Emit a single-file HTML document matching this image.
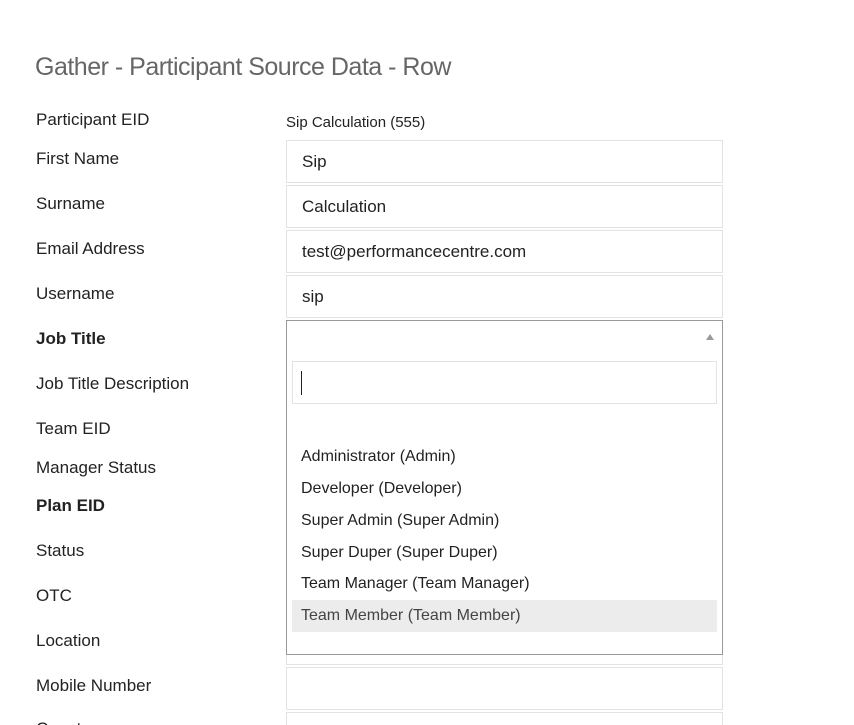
<html style="overflow:hidden"><head><style>
html,body{overflow:hidden;height:725px}
body{margin:0;width:854px;background:#fff;font-family:"Liberation Sans",sans-serif;color:#222;position:relative}
.a{position:absolute}
.l{position:absolute;left:36px;font-size:17px}
.in{position:absolute;left:286px;height:41px;border:1px solid #e3e3e3;font-size:17px;line-height:41px;padding-left:15px;width:420px;background:#fff}
.o{position:absolute;left:301px;font-size:16px;color:#222}
</style></head><body>
<div class="a" style="left:35px;top:53px;font-size:25px;color:#666;letter-spacing:-0.5px">Gather - Participant Source Data - Row</div>
<div class="l" style="top:110px">Participant EID</div>
<div class="a" style="left:286px;top:114px;font-size:15px">Sip Calculation (555)</div>
<div class="l" style="top:149px">First Name</div>
<div class="l" style="top:194px">Surname</div>
<div class="l" style="top:239px">Email Address</div>
<div class="l" style="top:284px">Username</div>
<div class="l" style="top:329px;font-weight:bold">Job Title</div>
<div class="l" style="top:374px">Job Title Description</div>
<div class="l" style="top:419px">Team EID</div>
<div class="l" style="top:458px">Manager Status</div>
<div class="l" style="top:496px;font-weight:bold">Plan EID</div>
<div class="l" style="top:541px">Status</div>
<div class="l" style="top:586px">OTC</div>
<div class="l" style="top:631px">Location</div>
<div class="l" style="top:676px">Mobile Number</div>
<div class="l" style="top:719px">Country</div>
<div class="in" style="top:140px">Sip</div>
<div class="in" style="top:185px">Calculation</div>
<div class="in" style="top:230px">test@performancecentre.com</div>
<div class="in" style="top:275px">sip</div>
<div class="in" style="top:622px"></div>
<div class="in" style="top:667px"></div>
<div class="in" style="top:712px"></div>
<div class="a" style="left:286px;top:320px;width:435px;height:333px;border:1px solid #999;background:#fff"></div>
<div class="a" style="left:706px;top:334px;width:0;height:0;border-left:4px solid transparent;border-right:4px solid transparent;border-bottom:6px solid #999"></div>
<div class="a" style="left:292px;top:361px;width:423px;height:41px;border:1px solid #e3e3e3"></div>
<div class="a" style="left:301px;top:371px;width:1px;height:24px;background:#222"></div>
<div class="a" style="left:292px;top:600px;width:425px;height:32px;background:#ececec"></div>
<div class="o" style="top:448px">Administrator (Admin)</div>
<div class="o" style="top:480px">Developer (Developer)</div>
<div class="o" style="top:512px">Super Admin (Super Admin)</div>
<div class="o" style="top:544px">Super Duper (Super Duper)</div>
<div class="o" style="top:575px">Team Manager (Team Manager)</div>
<div class="o" style="top:607px;color:#444">Team Member (Team Member)</div>
</body></html>
